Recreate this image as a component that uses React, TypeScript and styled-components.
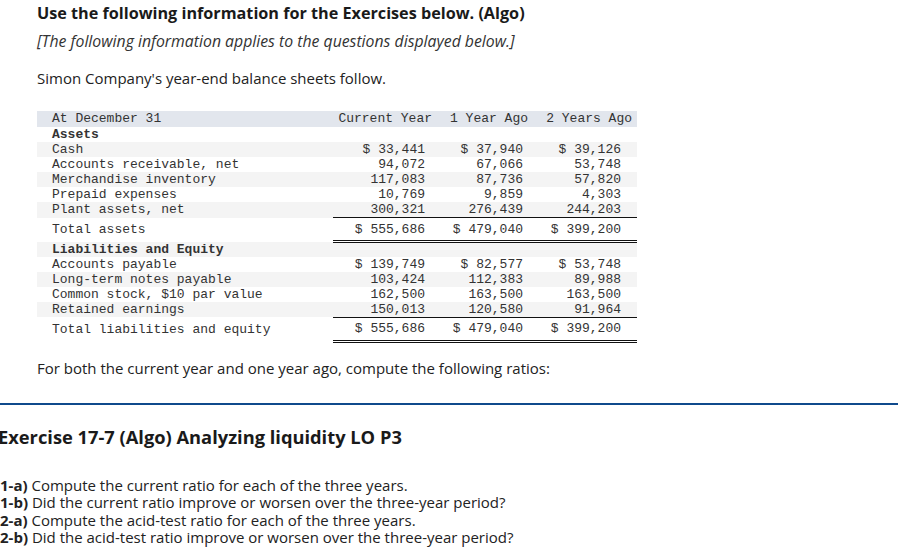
import React from "react";
import styled, { createGlobalStyle } from "styled-components";

const GlobalStyle = createGlobalStyle`
  html, body {
    margin: 0;
    padding: 0;
    background: #ffffff;
    overflow: hidden;
  }
  body {
    font-family: "Open Sans", "Liberation Sans", Arial, sans-serif;
    color: #222222;
  }
`;

type Row = {
  label: string;
  values?: string[];
  kind?: "section" | "line" | "last" | "total";
};

const rows: Row[] = [
  { label: "Assets", kind: "section" },
  { label: "Cash", values: ["$ 33,441", "$ 37,940", "$ 39,126"] },
  { label: "Accounts receivable, net", values: ["94,072", "67,066", "53,748"] },
  { label: "Merchandise inventory", values: ["117,083", "87,736", "57,820"] },
  { label: "Prepaid expenses", values: ["10,769", "9,859", "4,303"] },
  { label: "Plant assets, net", values: ["300,321", "276,439", "244,203"], kind: "last" },
  { label: "Total assets", values: ["$ 555,686", "$ 479,040", "$ 399,200"], kind: "total" },
  { label: "Liabilities and Equity", kind: "section" },
  { label: "Accounts payable", values: ["$ 139,749", "$ 82,577", "$ 53,748"] },
  { label: "Long-term notes payable", values: ["103,424", "112,383", "89,988"] },
  { label: "Common stock, $10 par value", values: ["162,500", "163,500", "163,500"] },
  { label: "Retained earnings", values: ["150,013", "120,580", "91,964"], kind: "last" },
  { label: "Total liabilities and equity", values: ["$ 555,686", "$ 479,040", "$ 399,200"], kind: "total" },
];

const App = () => {
  return (
    <>
      <GlobalStyle />
      <Page>
        <Intro>
          <Title>Use the following information for the Exercises below. (Algo)</Title>
          <Note>[The following information applies to the questions displayed below.]</Note>
          <Para>Simon Company's year-end balance sheets follow.</Para>
          <Sheet>
            <thead>
              <HeadRow>
                <HeadLabel>At December 31</HeadLabel>
                <HeadCell>Current Year</HeadCell>
                <HeadCell>1 Year Ago</HeadCell>
                <HeadCell>2 Years Ago</HeadCell>
              </HeadRow>
            </thead>
            <tbody>
              {rows.map((r, i) => (
                <BodyRow key={r.label} $shade={i % 2 === 1} $total={r.kind === "total"}>
                  <LabelCell $bold={r.kind === "section"}>{r.label}</LabelCell>
                  {[0, 1, 2].map((c) => (
                    <NumCell key={c} $kind={r.kind}>
                      {r.values ? r.values[c] : ""}
                    </NumCell>
                  ))}
                </BodyRow>
              ))}
            </tbody>
          </Sheet>
          <Ask>For both the current year and one year ago, compute the following ratios:</Ask>
        </Intro>
        <Divider />
        <Exercise>
          <ExerciseTitle>Exercise 17-7 (Algo) Analyzing liquidity LO P3</ExerciseTitle>
          <Questions>
            <Question>
              <b>1-a)</b> Compute the current ratio for each of the three years.
            </Question>
            <Question>
              <b>1-b)</b> Did the current ratio improve or worsen over the three-year period?
            </Question>
            <Question>
              <b>2-a)</b> Compute the acid-test ratio for each of the three years.
            </Question>
            <Question>
              <b>2-b)</b> Did the acid-test ratio improve or worsen over the three-year period?
            </Question>
          </Questions>
        </Exercise>
      </Page>
    </>
  );
};

export default App;

const Page = styled.div`
  width: 898px;
  height: 552px;
  overflow: hidden;
`;

const Intro = styled.section`
  padding: 2px 0 0 37px;
`;

const Title = styled.h2`
  margin: 0;
  font-size: 16.2px;
  line-height: 22px;
  font-weight: 700;
  color: #1a1a1a;
`;

const Note = styled.p`
  margin: 7px 0 0;
  font-size: 15.8px;
  line-height: 20px;
  font-style: italic;
  color: #333333;
`;

const Para = styled.p`
  margin: 17px 0 0;
  font-size: 15px;
  line-height: 20px;
  color: #222222;
`;

const Sheet = styled.table`
  margin-top: 23px;
  width: 600px;
  border-collapse: collapse;
  table-layout: fixed;
  font-family: "Liberation Mono", "Courier New", monospace;
  font-size: 13px;
  color: #333333;
`;

const HeadRow = styled.tr`
  background: #e2e6ed;
  height: 16px;
`;

const HeadLabel = styled.th`
  width: 281px;
  text-align: left;
  font-weight: 400;
  padding: 0 0 0 15px;
  line-height: 16px;
`;

const HeadCell = styled.th`
  text-align: right;
  font-weight: 400;
  padding: 0 5px 0 0;
  line-height: 16px;
  white-space: nowrap;
  &:nth-child(2) {
    width: 99px;
  }
  &:nth-child(3) {
    width: 91px;
  }
  &:nth-child(4) {
    width: 99px;
  }
`;

const BodyRow = styled.tr<{ $shade: boolean; $total: boolean }>`
  background: ${(p) => (p.$shade ? "#f4f4f4" : "#ffffff")};
  height: ${(p) => (p.$total ? "24px" : "15px")};
`;

const LabelCell = styled.td<{ $bold: boolean }>`
  padding: 0 0 0 15px;
  line-height: 15px;
  font-weight: ${(p) => (p.$bold ? 700 : 400)};
  white-space: nowrap;
`;

const NumCell = styled.td<{ $kind?: string }>`
  text-align: right;
  padding: 0 12px 0 0;
  line-height: 15px;
  white-space: nowrap;
  border-bottom: ${(p) =>
    p.$kind === "last" ? "1px solid #111" : p.$kind === "total" ? "3px double #111" : "none"};
  &:nth-child(3) {
    padding-right: 10px;
  }
  &:nth-child(4) {
    padding-right: 16px;
  }
`;

const Ask = styled.p`
  margin: 15px 0 0;
  font-size: 15px;
  line-height: 20px;
  color: #222222;
`;

const Divider = styled.hr`
  margin: 25px 0 0;
  border: none;
  height: 2px;
  background: #0f4a8c;
`;

const Exercise = styled.section`
  margin-left: -2px;
  padding-top: 19px;
`;

const ExerciseTitle = styled.h3`
  margin: 0;
  font-size: 18.3px;
  line-height: 25px;
  font-weight: 700;
  color: #1a1a1a;
`;

const Questions = styled.div`
  margin-top: 28px;
  padding-left: 2px;
`;

const Question = styled.p`
  margin: 0;
  font-size: 15px;
  line-height: 17.6px;
  color: #222222;
  b {
    font-weight: 700;
  }
`;
